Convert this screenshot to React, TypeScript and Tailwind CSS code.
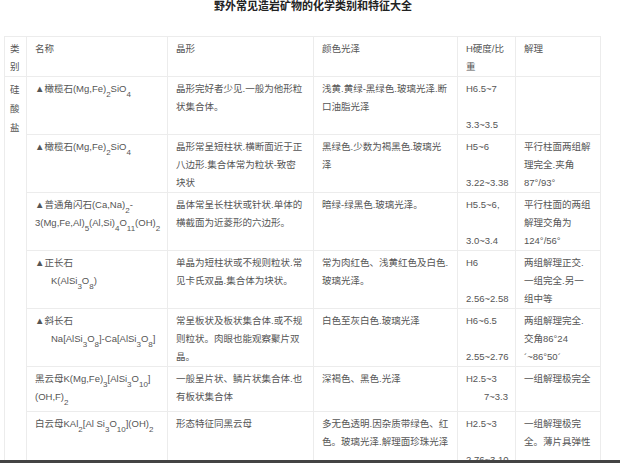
import React from "react";

const S = ({ c }: { c: string }) => <sub className="text-[8px] align-[-3px] leading-none">{c}</sub>;

const rows: { h: number; name: React.ReactNode; form: string; color: string; hard: React.ReactNode; cleave: React.ReactNode }[] = [
  { h: 55, name: <>▲橄榄石(Mg,Fe)<S c="2" />SiO<S c="4" /></>, form: "晶形完好者少见.一般为他形粒状集合体。", color: "浅黄.黄绿-黑绿色.玻璃光泽.断口油脂光泽", hard: <>H6.5~7<br /><br />3.3~3.5</>, cleave: "" },
  { h: 54, name: <>▲橄榄石(Mg,Fe)<S c="2" />SiO<S c="4" /></>, form: "晶形常呈短柱状.横断面近于正八边形.集合体常为粒状-致密块状", color: "黑绿色.少数为褐黑色.玻璃光泽", hard: <>H5~6<br /><br />3.22~3.38</>, cleave: "平行柱面两组解理完全.夹角87°/93°" },
  { h: 54, name: <>▲普通角闪石(Ca,Na)<S c="2" />-<br />3(Mg,Fe,Al)<S c="5" />(Al,Si)<S c="4" />O<S c="11" />(OH)<S c="2" /></>, form: "晶体常呈长柱状或针状.单体的横截面为近菱形的六边形。", color: "暗绿-绿黑色.玻璃光泽。", hard: <>H5.5~6,<br /><br />3.0~3.4</>, cleave: "平行柱面的两组解理交角为124°/56°" },
  { h: 55, name: <>▲正长石<br /><span className="pl-4">K(AlSi<S c="3" />O<S c="8" />)</span></>, form: "单晶为短柱状或不规则粒状.常见卡氏双晶.集合体为块状。", color: "常为肉红色、浅黄红色及白色.玻璃光泽。", hard: <>H6<br /><br />2.56~2.58</>, cleave: "两组解理正交.一组完全.另一组中等" },
  { h: 55, name: <>▲斜长石<br /><span className="pl-4">Na[AlSi<S c="3" />O<S c="8" />]-Ca[AlSi<S c="3" />O<S c="8" />]</span></>, form: "常呈板状及板状集合体.或不规则粒状。肉眼也能观察聚片双晶。", color: "白色至灰白色.玻璃光泽", hard: <>H6~6.5<br /><br />2.55~2.76</>, cleave: "两组解理完全.交角86°24´~86°50´" },
  { h: 45, name: <>黑云母K(Mg,Fe)<S c="3" />[AlSi<S c="3" />O<S c="10" />]<br />(OH,F)<S c="2" /></>, form: "一般呈片状、鳞片状集合体.也有板状集合体", color: "深褐色、黑色.光泽", hard: <>H2.5~3<br /><span className="pl-[18px]">7~3.3</span></>, cleave: "一组解理极完全" },
  { h: 49, name: <>白云母KAl<S c="2" />[Al Si<S c="3" />O<S c="10" />](OH)<S c="2" /></>, form: "形态特征同黑云母", color: "多无色透明.因杂质带绿色、红色。玻璃光泽.解理面珍珠光泽", hard: <>H2.5~3<br /><br />2.76~3.10</>, cleave: "一组解理极完全。薄片具弹性" },
  { h: 40, name: <>高岭石Al<S c="4" />[Si<S c="4" />O<S c="10" />]（OH）<S c="8" /></>, form: "多为隐晶质致密块状和土状集合体", color: "致密块状为白色.因杂质带浅", hard: <>H1</>, cleave: "干燥时易搓成粉末." },
];

const td = "border border-[#ececec] align-top px-[8px] pt-[3px] leading-[18px] overflow-hidden";
const tdn = "border border-[#ececec] align-top px-[8px] pt-[3px] leading-[18px] whitespace-nowrap overflow-visible";
const tdc = "border border-[#ececec] align-top px-[5px] pt-[3px] leading-[18px]";

export default function App() {
  return (
    <div className="w-[620px] h-[463px] overflow-hidden bg-white relative text-[#555] text-[9.5px]" style={{ fontFamily: '"Liberation Sans","Noto Sans CJK SC",sans-serif' }}>
      <div className="text-center font-bold text-[#222] text-[11px] leading-[12px] pt-[0px] pl-[6px] h-[36px]">野外常见造岩矿物的化学类别和特征大全</div>
      <table className="border-collapse table-fixed ml-[4px] w-[596px]">
        <colgroup>
          <col className="w-[22px]" />
          <col className="w-[141px]" />
          <col className="w-[146px]" />
          <col className="w-[144px]" />
          <col className="w-[58px]" />
          <col className="w-[85px]" />
        </colgroup>
        <tbody>
          <tr className="h-[38px]">
            <td className={tdc}>类别</td>
            <td className={td}>名称</td>
            <td className={td}>晶形</td>
            <td className={td}>颜色光泽</td>
            <td className={td}>H硬度/比重</td>
            <td className={td}>解理</td>
          </tr>
          {rows.map((r, i) => (
            <tr key={i} style={{ height: r.h }}>
              {i === 0 && <td rowSpan={8} className={tdc + " leading-[19px]"}>硅<br />酸<br />盐</td>}
              <td className={tdn}>{r.name}</td>
              <td className={td}>{r.form}</td>
              <td className={td}>{r.color}</td>
              <td className={tdn}>{r.hard}</td>
              <td className={td}>{r.cleave}</td>
            </tr>
          ))}
        </tbody>
      </table>
      <div className="absolute left-0 right-0 bottom-0 h-[3px] bg-[#444]" />
    </div>
  );
}
